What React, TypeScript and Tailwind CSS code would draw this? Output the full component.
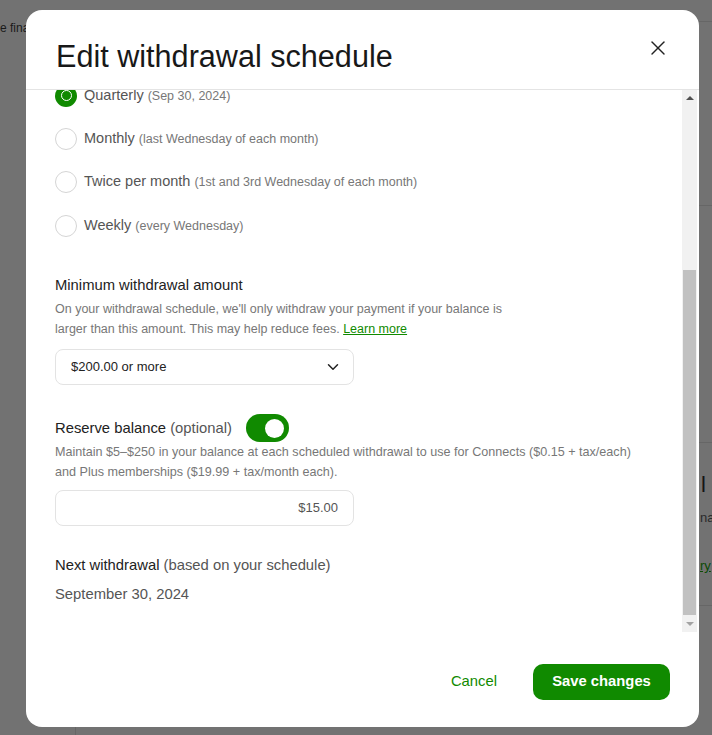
import { X, ChevronDown } from "lucide-react";

const font = { fontFamily: '"Liberation Sans", Arial, sans-serif' };

const options = [
  { label: "Quarterly", hint: "(Sep 30, 2024)", checked: true },
  { label: "Monthly", hint: "(last Wednesday of each month)", checked: false },
  { label: "Twice per month", hint: "(1st and 3rd Wednesday of each month)", checked: false },
  { label: "Weekly", hint: "(every Wednesday)", checked: false },
];

const Radio = ({ checked }: { checked: boolean }) =>
  checked ? (
    <div className="w-[22px] h-[22px] rounded-full bg-[#108a00] flex items-center justify-center shrink-0">
      <div className="w-[11px] h-[11px] rounded-full border-[1.5px] border-white" />
    </div>
  ) : (
    <div className="w-[22px] h-[22px] rounded-full border-[1.5px] border-[#d5d5d5] bg-white shrink-0" />
  );

const Scrollbar = () => (
  <div className="w-[15px] h-full bg-[#f1f1f1] flex flex-col items-center">
    <div className="h-[16px] flex items-center justify-center">
      <div className="w-0 h-0 border-l-[4px] border-r-[4px] border-b-[4px] border-l-transparent border-r-transparent border-b-[#505050]" />
    </div>
    <div className="h-[164px]" />
    <div className="w-[13px] h-[345px] bg-[#c1c1c1]" />
    <div className="flex-1 flex items-center justify-center">
      <div className="w-0 h-0 border-l-[4px] border-r-[4px] border-t-[4px] border-l-transparent border-r-transparent border-t-[#a3a3a3]" />
    </div>
  </div>
);

const Backdrop = () => (
  <>
    <div className="absolute left-0 top-[19px] text-[12px] text-[#1a1a1a]">e fina</div>
    <div className="absolute left-[699px] right-0 top-[21px] h-px bg-[#666]" />
    <div className="absolute left-[699px] right-0 top-[205px] h-px bg-[#666]" />
    <div className="absolute left-[699px] right-0 top-[442px] h-px bg-[#666]" />
    <div className="absolute left-[699px] right-0 top-[605px] h-px bg-[#666]" />
    <div className="absolute left-[701px] top-[468px] text-[22px] text-[#151515]">l</div>
    <div className="absolute left-[700px] top-[508px] text-[13px] text-[#2a2a2a]">na</div>
    <div className="absolute left-[700px] top-[556px] text-[13px] text-[#0b4a05] underline">ry</div>
    <div className="absolute left-[75px] top-[727px] w-px h-[8px] bg-[#666]" />
  </>
);

export default function App() {
  return (
    <div className="relative w-[712px] h-[735px] bg-[#727272] overflow-hidden" style={font}>
      <Backdrop />
      <div className="absolute left-[26px] top-[10px] w-[673px] h-[717px] bg-white rounded-[16px] flex flex-col overflow-hidden">
        <div className="h-[80px] shrink-0 flex items-start justify-between pl-[30px] pr-[29px] border-b border-[#e4e4e4]">
          <h1 className="mt-[26px] text-[30.6px] leading-[40px] text-[#181818]">Edit withdrawal schedule</h1>
          <X className="mt-[26px] w-[24px] h-[24px] text-[#222]" strokeWidth={1.4} />
        </div>

        <div className="flex h-[542px]">
          <div className="flex-1 overflow-hidden pl-[29px] pr-[30px]">
            <div className="-mt-[16px] flex flex-col">
              {options.map((o) => (
                <div key={o.label} className="h-[43.3px] flex items-center gap-[7px]">
                  <Radio checked={o.checked} />
                  <span className="text-[14.5px] text-[#555]">
                    {o.label} <span className="text-[12.5px] text-[#777]">{o.hint}</span>
                  </span>
                </div>
              ))}
            </div>

            <div className="mt-[28px] text-[14.8px] leading-[20px] text-[#222]">Minimum withdrawal amount</div>
            <p className="mt-[4px] text-[12.5px] leading-[20px] text-[#777]">
              On your withdrawal schedule, we'll only withdraw your payment if your balance is
              <br />
              larger than this amount. This may help reduce fees.{" "}
              <span className="text-[#108a00] underline">Learn more</span>
            </p>
            <div className="mt-[10px] w-[299px] h-[36px] rounded-[8px] border border-[#e3e3e3] flex items-center justify-between pl-[15px] pr-[11px]">
              <span className="text-[13px] text-[#222]">$200.00 or more</span>
              <ChevronDown className="w-[18px] h-[18px] text-[#222]" strokeWidth={2} />
            </div>

            <div className="mt-[29px] flex items-center gap-[14px]">
              <span className="text-[14.8px] text-[#222]">
                Reserve balance <span className="text-[#555]">(optional)</span>
              </span>
              <div className="w-[43px] h-[28px] rounded-full bg-[#108a00] flex items-center justify-end pr-[5px]">
                <div className="w-[19px] h-[19px] rounded-full bg-white" />
              </div>
            </div>
            <p className="text-[12.6px] leading-[20px] text-[#777]">
              Maintain $5–$250 in your balance at each scheduled withdrawal to use for Connects ($0.15 + tax/each)
              <br />
              and Plus memberships ($19.99 + tax/month each).
            </p>
            <div className="mt-[8px] w-[299px] h-[36px] rounded-[8px] border border-[#e3e3e3] flex items-center justify-end pr-[15px]">
              <span className="text-[13px] text-[#555]">$15.00</span>
            </div>

            <div className="mt-[29px] text-[14.8px] leading-[20px] text-[#222]">
              Next withdrawal <span className="text-[#555]">(based on your schedule)</span>
            </div>
            <div className="mt-[9px] text-[14.8px] leading-[20px] text-[#555]">September 30, 2024</div>
          </div>
          <Scrollbar />
          <div className="w-[2px]" />
        </div>

        <div className="flex-1 flex items-center justify-end gap-[36px] pr-[29px] pt-[4px]">
          <button className="text-[14.8px] text-[#108a00]">Cancel</button>
          <button className="w-[137px] h-[36px] rounded-[10px] bg-[#108a00] text-white text-[14.8px] font-bold">
            Save changes
          </button>
        </div>
      </div>
    </div>
  );
}
